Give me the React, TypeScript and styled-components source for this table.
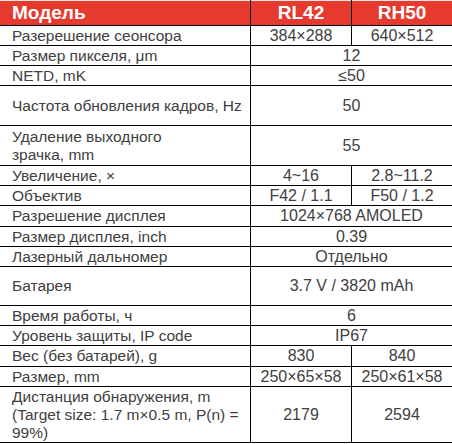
import styled, {createGlobalStyle} from "styled-components";

const GlobalStyle = createGlobalStyle`
  html, body {
    margin: 0;
    padding: 0;
    background: #fff;
  }
`

const Sheet = styled.div`
  width: 452px;
  display: flex;
  flex-direction: column;
  font-family: "Liberation Sans", Arial, sans-serif;
  color: #404040;
  font-size: 15.5px;
`

const Row = styled.div<{ $h: number }>`
  display: grid;
  grid-template-columns: 250px 101px 101px;
  height: ${props => `${props.$h}px`};
`

const HeadRow = styled(Row)`
  background: #e63a2e;
  color: #fff;
  font-weight: bold;
  font-size: 19px;
  box-shadow: inset 0 1px 0 #fbe3e1;
`

const Cell = styled.div<{ $span?: number, $first?: boolean }>`
  grid-column: span ${props => props.$span ?? 1};
  display: flex;
  align-items: center;
  justify-content: ${props => props.$first ? "flex-start" : "center"};
  padding-left: ${props => props.$first ? "12px" : "0"};
  border-bottom: 1px solid #000;
  border-left: ${props => props.$first ? "none" : "1px solid #000"};
  line-height: 18px;
  white-space: nowrap;
`

const Value = styled(Cell)`
  font-size: 16px;
`

type Spec = {
  label: string[]
  values: string[]
  h: number
}

const specs: Spec[] = [
  {label: ["Разерешение сеонсора"], values: ["384×288", "640×512"], h: 20},
  {label: ["Размер пикселя, μm"], values: ["12"], h: 20},
  {label: ["NETD, mK"], values: ["≤50"], h: 20},
  {label: ["Частота обновления кадров, Hz"], values: ["50"], h: 40},
  {label: ["Удаление выходного", "зрачка, mm"], values: ["55"], h: 40},
  {label: ["Увеличение, ×"], values: ["4~16", "2.8~11.2"], h: 20},
  {label: ["Объектив"], values: ["F42 / 1.1", "F50 / 1.2"], h: 20},
  {label: ["Разрешение дисплея"], values: ["1024×768 AMOLED"], h: 21},
  {label: ["Размер дисплея, inch"], values: ["0.39"], h: 20},
  {label: ["Лазерный дальномер"], values: ["Отдельно"], h: 20},
  {label: ["Батарея"], values: ["3.7 V / 3820 mAh"], h: 39},
  {label: ["Время работы, ч"], values: ["6"], h: 20},
  {label: ["Уровень защиты, IP code"], values: ["IP67"], h: 20},
  {label: ["Вес (без батарей), g"], values: ["830", "840"], h: 21},
  {label: ["Размер, mm"], values: ["250×65×58", "250×61×58"], h: 20},
  {label: ["Дистанция обнаружения, m", "(Target size: 1.7 m×0.5 m, P(n) =", "99%)"], values: ["2179", "2594"], h: 56},
]

const Label = styled.div`
  display: flex;
  flex-direction: column;
`

const App = () => {
  return (
    <>
      <GlobalStyle/>
      <Sheet>
        <HeadRow $h={26}>
          <Cell $first>Модель</Cell>
          <Cell>RL42</Cell>
          <Cell>RH50</Cell>
        </HeadRow>
        {specs.map(spec => (
          <Row key={spec.label[0]} $h={spec.h}>
            <Cell $first>
              <Label>
                {spec.label.map(line => <span key={line}>{line}</span>)}
              </Label>
            </Cell>
            {spec.values.map(v => (
              <Value key={v} $span={spec.values.length === 1 ? 2 : 1}>{v}</Value>
            ))}
          </Row>
        ))}
      </Sheet>
    </>
  );
};

export default App;
